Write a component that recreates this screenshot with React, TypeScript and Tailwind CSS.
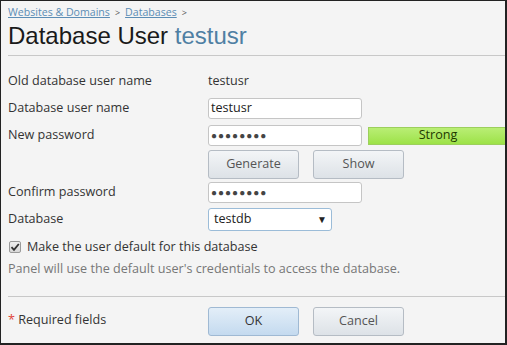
import React from "react";

const font = { fontFamily: '"Open Sans", "Noto Sans", sans-serif' };

function Row({ label, children, h }: { label: string; children: React.ReactNode; h: string }) {
  return (
    <div className={`flex items-center ${h}`}>
      <div className="w-[200px] shrink-0 text-[#333]">{label}</div>
      <div className="flex items-center">{children}</div>
    </div>
  );
}

function Btn({ children, primary }: { children: React.ReactNode; primary?: boolean }) {
  return (
    <button
      className={`w-[91px] h-[29px] rounded-[3px] border ${
        primary
          ? "border-[#9fb9d3] bg-gradient-to-b from-[#e3eef8] to-[#c4daef] text-[#333]"
          : "border-[#b5bcc4] bg-gradient-to-b from-[#f3f5f7] to-[#dde2e7] text-[#555]"
      }`}
    >
      {children}
    </button>
  );
}

function Input({ value, pw }: { value: string; pw?: boolean }) {
  return (
    <div className="w-[154px] h-[21px] bg-white border border-[#c5c5c5] rounded-[3px] flex items-center px-[2px] text-[#222]">
      {pw ? <span className="tracking-[1px] text-[10px] text-[#444]">●●●●●●●●</span> : value}
    </div>
  );
}

export default function App() {
  return (
    <div
      className="w-[507px] h-[345px] bg-[#f4f4f4] border-t border-l border-[#222] border-r-2 border-b-2 overflow-hidden text-[12.6px]"
      style={font}
    >
      <div className="pl-[7px]">
        <div className="pt-[3px] h-[20px] text-[10.6px] text-[#5b8db5] flex items-center gap-[5px]">
          <span className="underline">Websites &amp; Domains</span>
          <span className="text-[#555] text-[9px]">&gt;</span>
          <span className="underline">Databases</span>
          <span className="text-[#555] text-[9px]">&gt;</span>
        </div>
        <div
          className="text-[24px] leading-[30px] text-[#1a1a1a] h-[33px]"
          style={{ fontFamily: '"Liberation Sans", Arial, sans-serif' }}
        >
          Database User <span className="text-[#4f7fa3]">testusr</span>
        </div>
        <div className="border-t border-[#c8c8c8] mt-[1px]" />
        <div className="pt-[12px]">
          <Row label="Old database user name" h="h-[27px]">
            <span className="text-[#333]">testusr</span>
          </Row>
          <Row label="Database user name" h="h-[27px]">
            <Input value="testusr" />
          </Row>
          <Row label="New password" h="h-[27px]">
            <Input value="" pw />
            <div className="ml-[6px] w-[140px] h-[18px] bg-gradient-to-b from-[#b9ee74] to-[#9de246] border border-[#9ccf5c] flex items-center justify-center text-[#1e3a00]">
              Strong
            </div>
          </Row>
          <div className="flex h-[30px] items-start pl-[200px] pt-[1px]">
            <div className="flex gap-[14px]">
              <Btn>Generate</Btn>
              <Btn>Show</Btn>
            </div>
          </div>
          <Row label="Confirm password" h="h-[27px]">
            <Input value="" pw />
          </Row>
          <Row label="Database" h="h-[27px]">
            <div className="w-[124px] h-[23px] bg-white border border-[#9bbcd8] rounded-[3px] flex items-center justify-between pl-[5px] pr-[4px] text-[#222]">
              <span>testdb</span>
              <span className="text-[10px]">▼</span>
            </div>
          </Row>
          <div className="flex items-center h-[28px] gap-[6px] pl-[1px]">
            <div className="w-[12px] h-[12px] border border-[#9a9a9a] rounded-[2px] bg-gradient-to-b from-[#f0f0f0] to-[#d8d8d8] flex items-center justify-center">
              <svg width="10" height="10" viewBox="0 0 10 10">
                <path d="M1.5 5.2 L4 7.8 L8.8 2" stroke="#333" strokeWidth="1.8" fill="none" />
              </svg>
            </div>
            <span className="text-[#333]">Make the user default for this database</span>
          </div>
          <div className="text-[#777] h-[20px] leading-[16px]">
            Panel will use the default user's credentials to access the database.
          </div>
        </div>
        <div className="border-t border-[#c8c8c8] mt-[15px]" />
        <div className="flex items-center h-[46px]">
          <div className="w-[200px] text-[#333]">
            <span className="text-[#e0443a]">*</span> Required fields
          </div>
          <div className="flex gap-[14px] pt-[2px]">
            <Btn primary>OK</Btn>
            <Btn>Cancel</Btn>
          </div>
        </div>
      </div>
    </div>
  );
}
